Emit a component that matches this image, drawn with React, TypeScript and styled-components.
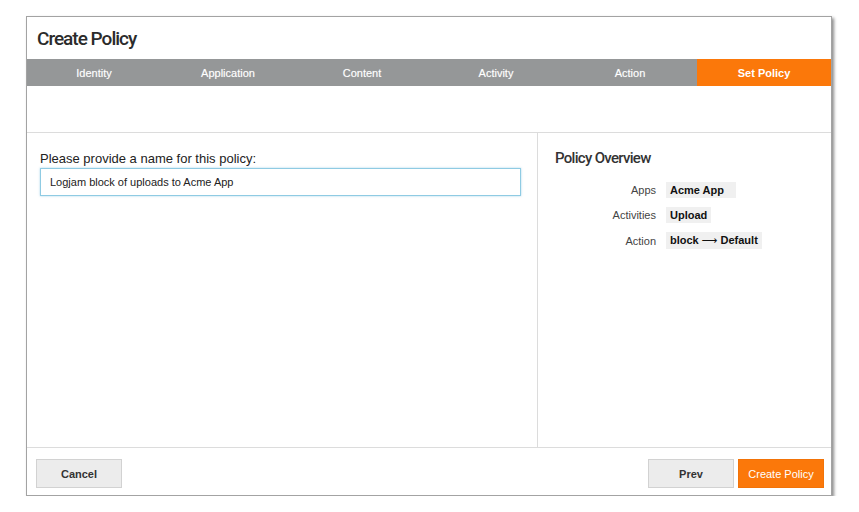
import React from "react";
import styled, { createGlobalStyle } from "styled-components";

const GlobalStyle = createGlobalStyle`
    body {
        margin: 0;
        background: #ffffff;
        font-family: "Liberation Sans", Arial, sans-serif;
    }
`;

const steps = ["Identity", "Application", "Content", "Activity", "Action", "Set Policy"];

const overview = [
    { label: "Apps", value: "Acme App", wide: true },
    { label: "Activities", value: "Upload" },
    { label: "Action", value: "block", target: "Default" },
];

export default function App() {
    return (
        <>
            <GlobalStyle />
            <Modal>
                <Header>
                    <Title>Create Policy</Title>
                </Header>
                <Steps>
                    {steps.map((s, i) => (
                        <Step key={s} active={i === steps.length - 1}>
                            {s}
                        </Step>
                    ))}
                </Steps>
                <Spacer />
                <Body>
                    <Main>
                        <Label>Please provide a name for this policy:</Label>
                        <NameInput defaultValue="Logjam block of uploads to Acme App" />
                    </Main>
                    <Side>
                        <SideTitle>Policy Overview</SideTitle>
                        <OverviewList>
                            {overview.map((o) => (
                                <OverviewRow key={o.label}>
                                    <OverviewLabel>{o.label}</OverviewLabel>
                                    <Chip wide={o.wide}>
                                        {o.value}
                                        {o.target && (
                                            <>
                                                <Arrow>⟶</Arrow>
                                                {o.target}
                                            </>
                                        )}
                                    </Chip>
                                </OverviewRow>
                            ))}
                        </OverviewList>
                    </Side>
                </Body>
                <Footer>
                    <Button>Cancel</Button>
                    <FooterRight>
                        <Button>Prev</Button>
                        <Button primary>Create Policy</Button>
                    </FooterRight>
                </Footer>
            </Modal>
        </>
    );
}

const Modal = styled.div`
    margin: 16px 0 0 26px;
    width: 806px;
    height: 480px;
    box-sizing: border-box;
    border: 1px solid #a3a3a3;
    box-shadow: 2px 2px 3px rgba(0, 0, 0, 0.45);
    background: #fff;
    display: flex;
    flex-direction: column;
`;

const Header = styled.div`
    height: 42px;
    display: flex;
    align-items: center;
    padding-left: 10px;
`;

const Title = styled.h1`
    margin: 0;
    font-family: "Roboto", sans-serif;
    font-weight: 500;
    font-size: 19px;
    letter-spacing: -1px;
    color: #2b2b2b;
`;

const Steps = styled.div`
    height: 27px;
    display: grid;
    grid-template-columns: repeat(6, 1fr);
    background: #959798;
`;

const Step = styled.div<{ active?: boolean }>`
    display: flex;
    align-items: center;
    justify-content: center;
    font-size: 11px;
    font-weight: ${(p) => (p.active ? 700 : 400)};
    color: #fff;
    background: ${(p) => (p.active ? "#fb780a" : "transparent")};
    text-shadow: ${(p) => (p.active ? "none" : "0 0 1px rgba(255,255,255,0.4)")};
`;

const Spacer = styled.div`
    height: 46px;
    border-bottom: 1px solid #dcdcdc;
`;

const Body = styled.div`
    flex: 1;
    display: flex;
`;

const Main = styled.div`
    width: 511px;
    border-right: 1px solid #dcdcdc;
    padding: 18px 0 0 13px;
    box-sizing: border-box;
`;

const Label = styled.div`
    font-size: 13px;
    color: #222;
    margin-bottom: 2px;
`;

const NameInput = styled.input`
    display: block;
    width: 481px;
    height: 28px;
    box-sizing: border-box;
    border: 1px solid #8fcbe3;
    box-shadow: 0 0 2px rgba(110, 185, 220, 0.6);
    padding: 0 9px;
    font-family: "Liberation Sans", Arial, sans-serif;
    font-size: 11px;
    color: #222;
    outline: none;
`;

const Side = styled.div`
    flex: 1;
    padding: 16px 0 0 17px;
`;

const SideTitle = styled.h2`
    margin: 0 0 15px;
    font-family: "Roboto", sans-serif;
    font-weight: 500;
    font-size: 15px;
    letter-spacing: -0.7px;
    color: #333;
`;

const OverviewList = styled.div`
    display: flex;
    flex-direction: column;
    gap: 9px;
`;

const OverviewRow = styled.div`
    display: flex;
    align-items: center;
    gap: 10px;
`;

const OverviewLabel = styled.span`
    width: 101px;
    text-align: right;
    font-size: 11px;
    color: #444;
`;

const Chip = styled.span<{ wide?: boolean }>`
    background: #f0f0f0;
    padding: 2px ${(p) => (p.wide ? "12px" : "4px")} 2px 4px;
    font-size: 11px;
    font-weight: 700;
    color: #111;
`;

const Arrow = styled.span`
    font-family: "DejaVu Sans", sans-serif;
    font-weight: 400;
    margin: 0 3px;
`;

const Footer = styled.div`
    height: 48px;
    border-top: 1px solid #dcdcdc;
    display: flex;
    justify-content: space-between;
    padding: 11px 7px 0 9px;
    box-sizing: border-box;
`;

const FooterRight = styled.div`
    display: flex;
    gap: 4px;
`;

const Button = styled.button<{ primary?: boolean }>`
    width: 86px;
    height: 29px;
    box-sizing: border-box;
    border: 1px solid ${(p) => (p.primary ? "#f27308" : "#d2d2d2")};
    background: ${(p) => (p.primary ? "#fb780a" : "#ececec")};
    color: ${(p) => (p.primary ? "#fff" : "#333")};
    font-family: "Liberation Sans", Arial, sans-serif;
    font-size: 11px;
    font-weight: ${(p) => (p.primary ? 400 : 700)};
    cursor: pointer;
`;
